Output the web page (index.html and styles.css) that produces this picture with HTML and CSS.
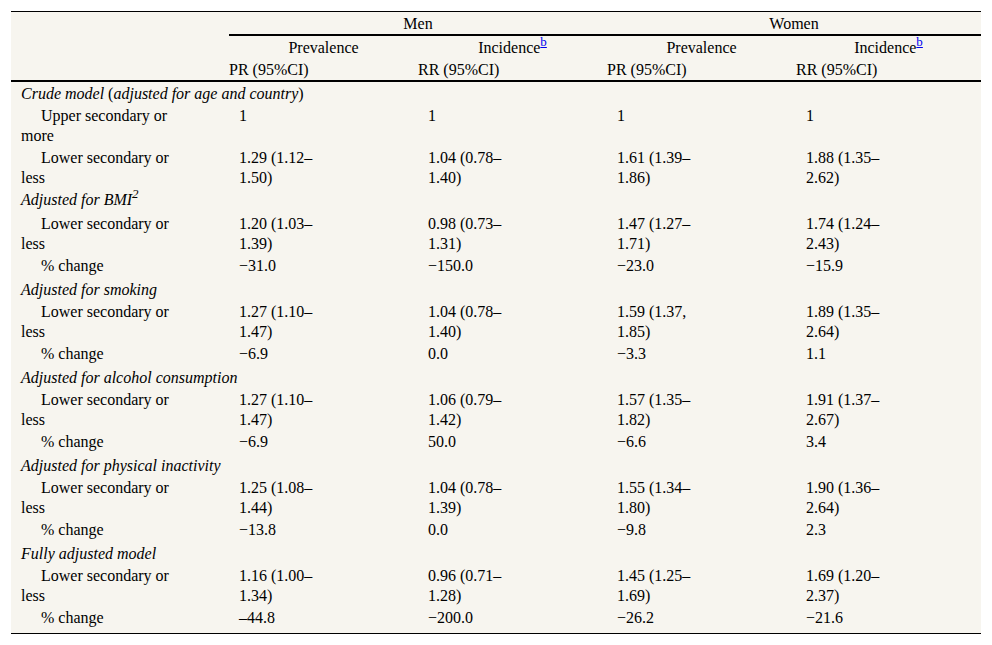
FILE: index.html
```html
<!DOCTYPE html>
<html lang="en">
<head>
<meta charset="utf-8">
<title>Table</title>
<link rel="stylesheet" href="styles.css">
</head>
<body>
<table class="tbl">
  <colgroup>
    <col class="c-label">
    <col class="c-data">
    <col class="c-data">
    <col class="c-data">
    <col class="c-last">
  </colgroup>
  <thead>
    <tr class="h1">
      <th class="blank"></th>
      <th colspan="2" class="group">Men</th>
      <th colspan="2" class="group">Women</th>
    </tr>
    <tr class="h2">
      <th class="blank"></th>
      <th class="center">Prevalence</th>
      <th class="center">Incidence<sup><a href="#fn-b">b</a></sup></th>
      <th class="center">Prevalence</th>
      <th class="center">Incidence<sup><a href="#fn-b">b</a></sup></th>
    </tr>
    <tr class="h3">
      <th class="blank"></th>
      <th>PR (95%CI)</th>
      <th>RR (95%CI)</th>
      <th>PR (95%CI)</th>
      <th>RR (95%CI)</th>
    </tr>
  </thead>
  <tbody>
    <tr class="sec">
      <td colspan="5"><i>Crude model</i> (<i>adjusted for age and country</i>)</td>
    </tr>
    <tr>
      <td class="lab">Upper secondary or more</td>
      <td>1</td><td>1</td><td>1</td><td>1</td>
    </tr>
    <tr>
      <td class="lab">Lower secondary or less</td>
      <td>1.29 (1.12–1.50)</td><td>1.04 (0.78–1.40)</td><td>1.61 (1.39–1.86)</td><td>1.88 (1.35–2.62)</td>
    </tr>

    <tr class="sec sup-row">
      <td colspan="5"><i>Adjusted for BMI<sup>2</sup></i></td>
    </tr>
    <tr>
      <td class="lab">Lower secondary or less</td>
      <td>1.20 (1.03–1.39)</td><td>0.98 (0.73–1.31)</td><td>1.47 (1.27–1.71)</td><td>1.74 (1.24–2.43)</td>
    </tr>
    <tr class="chg">
      <td class="lab">% change</td>
      <td>−31.0</td><td>−150.0</td><td>−23.0</td><td>−15.9</td>
    </tr>

    <tr class="sec">
      <td colspan="5"><i>Adjusted for smoking</i></td>
    </tr>
    <tr>
      <td class="lab">Lower secondary or less</td>
      <td>1.27 (1.10–1.47)</td><td>1.04 (0.78–1.40)</td><td>1.59 (1.37, 1.85)</td><td>1.89 (1.35–2.64)</td>
    </tr>
    <tr class="chg">
      <td class="lab">% change</td>
      <td>−6.9</td><td>0.0</td><td>−3.3</td><td>1.1</td>
    </tr>

    <tr class="sec">
      <td colspan="5"><i>Adjusted for alcohol consumption</i></td>
    </tr>
    <tr>
      <td class="lab">Lower secondary or less</td>
      <td>1.27 (1.10–1.47)</td><td>1.06 (0.79–1.42)</td><td>1.57 (1.35–1.82)</td><td>1.91 (1.37–2.67)</td>
    </tr>
    <tr class="chg">
      <td class="lab">% change</td>
      <td>−6.9</td><td>50.0</td><td>−6.6</td><td>3.4</td>
    </tr>

    <tr class="sec">
      <td colspan="5"><i>Adjusted for physical inactivity</i></td>
    </tr>
    <tr>
      <td class="lab">Lower secondary or less</td>
      <td>1.25 (1.08–1.44)</td><td>1.04 (0.78–1.39)</td><td>1.55 (1.34–1.80)</td><td>1.90 (1.36–2.64)</td>
    </tr>
    <tr class="chg">
      <td class="lab">% change</td>
      <td>−13.8</td><td>0.0</td><td>−9.8</td><td>2.3</td>
    </tr>

    <tr class="sec">
      <td colspan="5"><i>Fully adjusted model</i></td>
    </tr>
    <tr>
      <td class="lab">Lower secondary or less</td>
      <td>1.16 (1.00–1.34)</td><td>0.96 (0.71–1.28)</td><td>1.45 (1.25–1.69)</td><td>1.69 (1.20–2.37)</td>
    </tr>
    <tr class="chg last">
      <td class="lab">% change</td>
      <td>–44.8</td><td>−200.0</td><td>−26.2</td><td>−21.6</td>
    </tr>
  </tbody>
</table>
</body>
</html>
```

FILE: styles.css
```css
html, body {
  margin: 0;
  padding: 0;
  background: #ffffff;
}

body {
  padding: 11px;
}

.tbl {
  width: 970px;
  table-layout: fixed;
  border-collapse: collapse;
  background: #f7f5ef;
  font-family: "Liberation Serif", "Times New Roman", serif;
  font-size: 16px;
  line-height: 20px;
  color: #000000;
  border-top: 1px solid #000000;
  border-bottom: 1px solid #000000;
}

.c-label { width: 218px; }
.c-data { width: 189px; }
.c-last { width: 185px; }

.tbl th {
  font-weight: normal;
  text-align: left;
  padding: 2px 0 0;
  vertical-align: top;
}

.tbl th.group {
  text-align: center;
  border-bottom: 2px solid #000000;
}

.tbl th.center {
  text-align: center;
}

.tbl tr.h3 th {
  border-bottom: 2px solid #000000;
}

.tbl sup {
  font-size: 13px;
  line-height: 0;
  vertical-align: 7px;
}

.tbl sup a {
  color: #0000ee;
  text-decoration: underline;
}

.tbl td {
  padding: 2px 94px 0 10px;
  vertical-align: top;
}

.tbl td.lab {
  padding-right: 44px;
  text-indent: 20px;
}

.tbl tr.sec td {
  padding-right: 10px;
}

.tbl tr.sup-row td {
  padding-bottom: 2px;
}

.tbl tr.chg td {
  padding-bottom: 2px;
}

.tbl tr.last td {
  padding-bottom: 5px;
}
```
